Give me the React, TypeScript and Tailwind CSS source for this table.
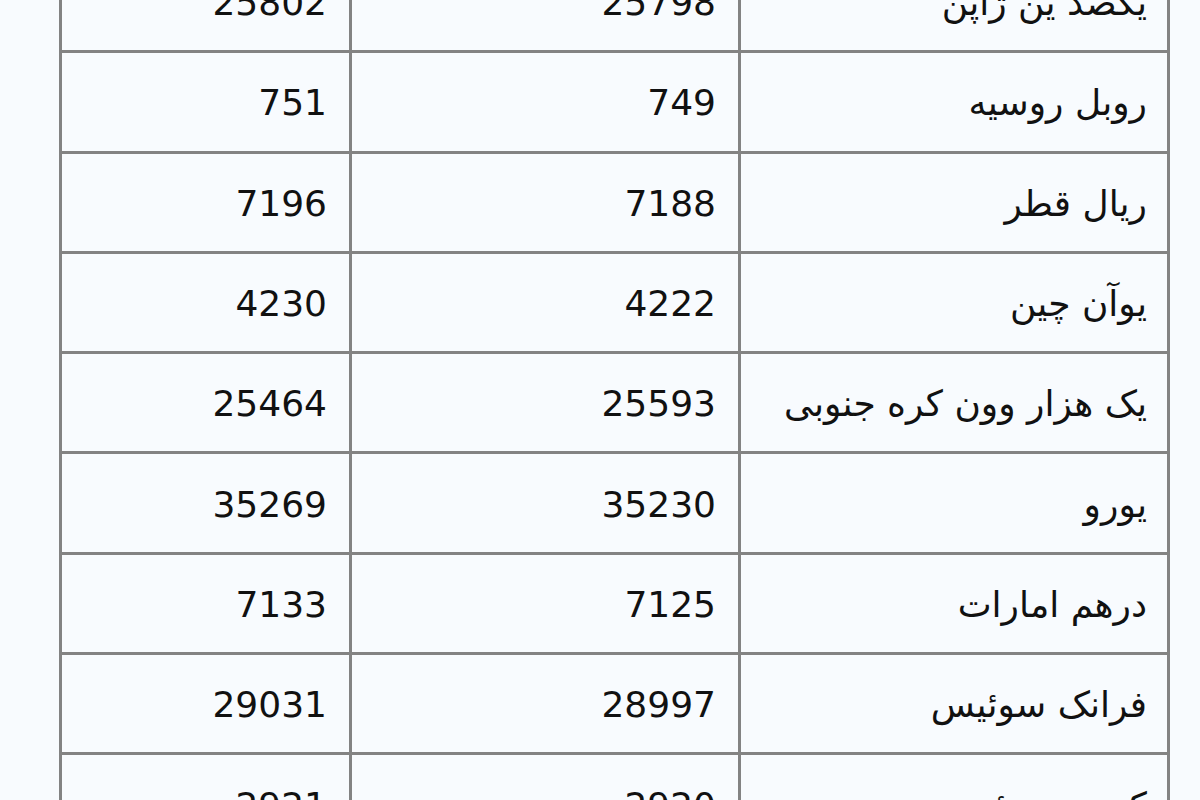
import React from "react";

const rows: [string, string, string][] = [
  ["25802", "25798", "یکصد ین ژاپن"],
  ["751", "749", "روبل روسیه"],
  ["7196", "7188", "ریال قطر"],
  ["4230", "4222", "یوآن چین"],
  ["25464", "25593", "یک هزار وون کره جنوبی"],
  ["35269", "35230", "یورو"],
  ["7133", "7125", "درهم امارات"],
  ["29031", "28997", "فرانک سوئیس"],
  ["2921", "2920", "کرون سوئد"],
];

export default function App() {
  return (
    <div className="w-[1200px] h-[800px] overflow-hidden bg-[#f8fbfe]">
      <div
        className="ml-[59px] -mt-[47px] w-[1111px] border-x-[3px] border-[#838383] text-[#111111] text-[36px] leading-none"
        style={{ fontFamily: '"DejaVu Sans", Verdana, sans-serif' }}
      >
        {rows.map((r, i) => (
          <div
            key={i}
            className="grid grid-cols-[290px_389px_426px] h-[100.3px] border-b-[3px] border-[#838383]"
          >
            <div className="flex items-center justify-end pt-[3px] pr-[22px] border-r-[3px] border-[#838383]">
              {r[0]}
            </div>
            <div className="flex items-center justify-end pt-[3px] pr-[22px] border-r-[3px] border-[#838383]">
              {r[1]}
            </div>
            <div dir="rtl" className="flex items-center justify-start pt-[3px] pr-[20px]">
              {r[2]}
            </div>
          </div>
        ))}
      </div>
    </div>
  );
}
